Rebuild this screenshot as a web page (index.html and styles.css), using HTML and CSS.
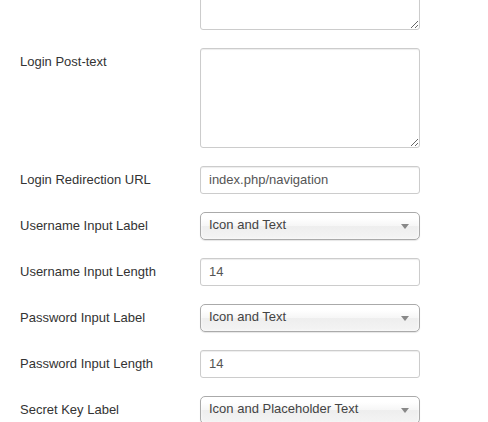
FILE: index.html
```html
<!DOCTYPE html>
<html>
<head>
<meta charset="utf-8">
<link rel="stylesheet" href="styles.css">
</head>
<body>
<div class="form">
  <div class="group first">
    <div class="label"></div>
    <div class="controls"><textarea class="area"></textarea></div>
  </div>
  <div class="group">
    <div class="label">Login Post-text</div>
    <div class="controls"><textarea class="area"></textarea></div>
  </div>
  <div class="group">
    <div class="label">Login Redirection URL</div>
    <div class="controls"><input class="text" type="text" value="index.php/navigation"></div>
  </div>
  <div class="group">
    <div class="label">Username Input Label</div>
    <div class="controls"><div class="select"><span>Icon and Text</span><i class="arrow"></i></div></div>
  </div>
  <div class="group">
    <div class="label">Username Input Length</div>
    <div class="controls"><input class="text" type="text" value="14"></div>
  </div>
  <div class="group">
    <div class="label">Password Input Label</div>
    <div class="controls"><div class="select"><span>Icon and Text</span><i class="arrow"></i></div></div>
  </div>
  <div class="group">
    <div class="label">Password Input Length</div>
    <div class="controls"><input class="text" type="text" value="14"></div>
  </div>
  <div class="group">
    <div class="label">Secret Key Label</div>
    <div class="controls"><div class="select"><span>Icon and Placeholder Text</span><i class="arrow"></i></div></div>
  </div>
</div>
</body>
</html>
```

FILE: styles.css
```css
html, body {
  margin: 0;
  padding: 0;
  background: #fff;
  overflow: hidden;
}
body {
  font-family: "Liberation Sans", Arial, sans-serif;
  font-size: 13px;
  line-height: 18px;
  color: #333;
}
.form {
  padding-left: 20px;
  margin-top: -70px;
}
.group {
  display: flex;
  margin-bottom: 18px;
}
.label {
  width: 180px;
  flex: none;
  padding-top: 5px;
}
.controls {
  flex: none;
}
.area, .text {
  box-sizing: border-box;
  width: 220px;
  border: 1px solid #ccc;
  border-radius: 3px;
  box-shadow: inset 0 1px 1px rgba(0,0,0,0.075);
  font-family: "Liberation Sans", Arial, sans-serif;
  font-size: 13px;
  color: #555;
  background: #fff;
  display: block;
  margin: 0;
}
.area {
  height: 100px;
  padding: 4px 6px;
  resize: vertical;
}
.text {
  height: 28px;
  padding: 3px 8px 5px;
  line-height: 18px;
}
.select {
  box-sizing: border-box;
  width: 220px;
  height: 28px;
  border: 1px solid #aaa;
  border-radius: 5px;
  background: linear-gradient(#fff 20%, #f6f6f6 50%, #eee 52%, #f4f4f4 100%);
  box-shadow: inset 0 0 3px #fff, 0 1px 1px rgba(0,0,0,0.1);
  display: flex;
  align-items: center;
  justify-content: space-between;
  padding: 0 10px 2px 8px;
  color: #444;
  font-size: 13px;
}
.arrow {
  width: 0;
  height: 0;
  border-left: 4px solid transparent;
  border-right: 4px solid transparent;
  border-top: 5px solid #888;
  margin-top: 3px;
}
```
